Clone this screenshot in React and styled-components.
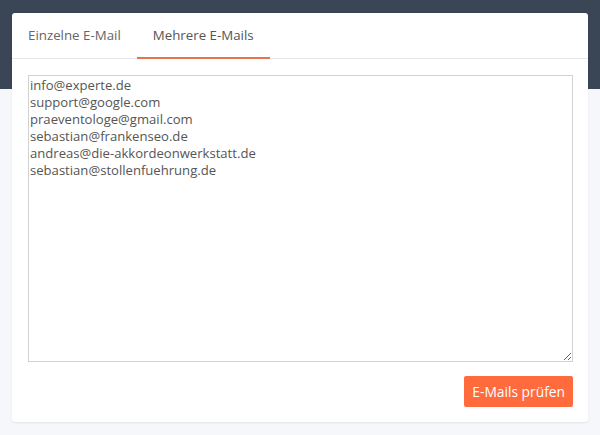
import React from "react";
import styled, { createGlobalStyle } from "styled-components";

const GlobalStyle = createGlobalStyle`
  body {
    margin: 0;
    background: #f5f7fa;
    font-family: "Open Sans", "Noto Sans", Arial, sans-serif;
  }
`;

const Page = styled.div`
  min-height: 435px;
  padding: 13px 12px;
  box-sizing: border-box;
  background: linear-gradient(#3a4555 0, #3a4555 89px, #f5f7fa 89px);
`;

const Card = styled.div`
  background: #fff;
  border-radius: 3px;
  box-shadow: 0 1px 2px rgba(0, 0, 0, 0.08);
  display: flex;
  flex-direction: column;
`;

const Tabs = styled.div`
  display: flex;
  border-bottom: 1px solid #e4e6e8;
  height: 45px;
`;

const Tab = styled.div`
  padding: 0 16px;
  display: flex;
  align-items: center;
  font-size: 13.3px;
  color: ${(p) => (p.$active ? "#555" : "#666")};
  border-bottom: 2px solid ${(p) => (p.$active ? "#e8734a" : "transparent")};
  margin-bottom: -1px;
  cursor: pointer;
`;

const Body = styled.div`
  padding: 16px 15px 15px 16px;
  display: flex;
  flex-direction: column;
  gap: 14px;
`;

const Area = styled.textarea`
  height: 287px;
  border: 1px solid #cfd2d4;
  padding: 1px 1px;
  font-family: inherit;
  font-size: 13.1px;
  line-height: 17px;
  color: #555;
  box-sizing: border-box;
  resize: vertical;
  outline: none;
`;

const Actions = styled.div`
  display: flex;
  justify-content: flex-end;
`;

const Button = styled.button`
  background: #ff6b3d;
  border: none;
  border-radius: 2px;
  color: #fff;
  font-family: inherit;
  font-size: 13.8px;
  height: 31px;
  padding: 0 8px;
`;

const emails = [
  "info@experte.de",
  "support@google.com",
  "praeventologe@gmail.com",
  "sebastian@frankenseo.de",
  "andreas@die-akkordeonwerkstatt.de",
  "sebastian@stollenfuehrung.de",
].join("\n");

const App = () => {
  return (
    <>
      <GlobalStyle />
      <Page>
        <Card>
          <Tabs>
            <Tab>Einzelne E-Mail</Tab>
            <Tab $active>Mehrere E-Mails</Tab>
          </Tabs>
          <Body>
            <Area defaultValue={emails} spellCheck={false} />
            <Actions>
              <Button>E-Mails prüfen</Button>
            </Actions>
          </Body>
        </Card>
      </Page>
    </>
  );
};

export default App;
